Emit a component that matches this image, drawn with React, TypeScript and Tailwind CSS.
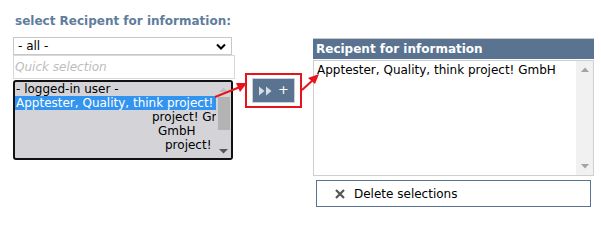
import React from "react";

export default function App() {
  const font = { fontFamily: '"DejaVu Sans", Verdana, sans-serif' };
  return (
    <div className="relative w-[601px] h-[250px] bg-white text-[12px] text-black" style={font}>
      <div className="flex pt-[13px]">
        {/* Left column */}
        <div className="flex flex-col pl-[13px] w-[245px]">
          <div className="pl-[2px] text-[12px] font-bold text-[#5f7d9c] leading-[16px]">select Recipent for information:</div>
          <div className="mt-[8px] w-[219px] h-[18px] border border-[#c8c8c8] flex items-center justify-between pl-[4px] pr-[5px] leading-none">
            <span>- all -</span>
            <svg width="10" height="7" viewBox="0 0 10 7"><path d="M1 1.5 L5 5.5 L9 1.5" stroke="#000" strokeWidth="2" fill="none" /></svg>
          </div>
          <div className="w-[222px] h-[24px] border border-[#d8d8d8] flex items-center pl-[1px] italic text-[#bdbdbd]">Quick selection</div>
          <div className="mt-[1px] w-[220px] h-[80px] border-2 border-[#111] rounded-[3px] bg-[#d4d4d8] flex overflow-hidden">
            <div className="flex-1 flex flex-col leading-[14px] overflow-hidden whitespace-nowrap">
              <div className="pl-[1px]">- logged-in user -</div>
              <div className="pl-[1px] bg-[#3394f0] text-white">Apptester, Quality, think project!</div>
              <div className="pl-[137px]">project! GmbH</div>
              <div className="pl-[143px]">GmbH</div>
              <div className="pl-[150px]">project!</div>
            </div>
            <div className="w-[15px] flex flex-col items-center bg-[#d4d4d8]">
              <svg width="9" height="6" viewBox="0 0 9 6" className="mt-[5px]"><path d="M0 5 L4.5 0.5 L9 5 Z" fill="#bdbdbd" /></svg>
              <div className="mt-[4px] w-[12px] h-[33px] bg-[#b3b3b3]" />
              <div className="flex-1" />
              <svg width="9" height="6" viewBox="0 0 9 6" className="mb-[4px]"><path d="M0 1 L4.5 5.5 L9 1 Z" fill="#555" /></svg>
            </div>
          </div>
        </div>
        {/* Middle button */}
        <div className="pt-[60px]">
          <div className="w-[57px] h-[35px] border-2 border-[#e8141c] flex items-center justify-center">
            <div className="w-[43px] h-[25px] bg-[#5a7391] border border-[#c8d0da] flex items-center justify-center gap-[4px]">
              <svg width="16" height="10" viewBox="0 0 16 10">
                <path d="M1 0.5 L6.5 5 L1 9.5 Z" fill="#d8dde4" />
                <path d="M8 0.5 L13.5 5 L8 9.5 Z" fill="#d8dde4" />
              </svg>
              <span className="text-white text-[13px] leading-none -mt-[2px]">+</span>
            </div>
          </div>
        </div>
        {/* Right column */}
        <div className="pl-[11px] pt-[25px] flex flex-col">
          <div className="w-[281px] h-[21px] bg-[#5a7391] text-white font-bold flex items-center pl-[3px] border-t border-[#c8c8c8]">Recipent for information</div>
          <div className="mt-[1px] w-[281px] h-[116px] border border-[#cfcfcf] flex">
            <div className="flex-1 pl-[3px] pt-[2px] leading-[14px]">Apptester, Quality, think project! GmbH</div>
            <div className="w-[17px] bg-[#f1f1f1] flex flex-col items-center justify-between py-[6px]">
              <svg width="8" height="5" viewBox="0 0 8 5"><path d="M0 5 L4 0.5 L8 5 Z" fill="#a3a3a3" /></svg>
              <svg width="8" height="5" viewBox="0 0 8 5"><path d="M0 0 L4 4.5 L8 0 Z" fill="#a3a3a3" /></svg>
            </div>
          </div>
          <div className="mt-[4px] ml-[3px] w-[275px] h-[27px] border border-[#5a7391] flex items-center pl-[18px] gap-[9px]">
            <svg width="10" height="10" viewBox="0 0 10 10"><path d="M1 1 L9 9 M9 1 L1 9" stroke="#555" strokeWidth="2.2" /></svg>
            <span>Delete selections</span>
          </div>
        </div>
      </div>
      {/* Arrows overlay */}
      <svg className="absolute left-0 top-0 pointer-events-none" width="601" height="250">
        <line x1="215" y1="97" x2="240" y2="87" stroke="#e8141c" strokeWidth="2" />
        <path d="M247 83 L236 83 L240 92 Z" fill="#e8141c" />
        <line x1="302" y1="90" x2="313" y2="80" stroke="#e8141c" strokeWidth="2" />
        <path d="M319 74 L308 78 L315 84 Z" fill="#e8141c" />
      </svg>
    </div>
  );
}
